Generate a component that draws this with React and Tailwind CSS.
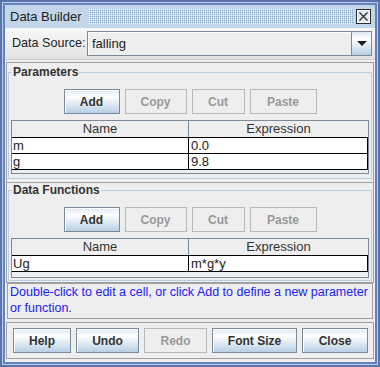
import React from 'react';

const font = "font-['Liberation_Sans',Arial,sans-serif]";

// Metal / Ocean styled push button
function Btn({ label, width, disabled }) {
  const base = 'h-[25px] flex items-center justify-center text-[12px] font-bold leading-none border';
  const look = disabled
    ? 'border-[#b8b8b8] bg-[#eeeeee] text-[#999999]'
    : 'border-[#7a8a99] bg-[linear-gradient(to_bottom,#dde8f3_0%,#ffffff_30%,#b8cfe5_100%)] text-[#333333] shadow-[inset_1px_1px_0_#ffffff]';
  return (
    <button type="button" className={`${base} ${look}`} style={{ width }}>
      {label}
    </button>
  );
}

function Table({ rows, empty }) {
  return (
    <div className="mx-[2px] mt-[6px] border border-[#7a8a99] bg-[#eeeeee] text-[13px] text-[#222222]">
      <div className="flex h-[17px] border-b border-black leading-[16px] text-[#333333]">
        <div className="w-[177px] border-r border-[#7a8a99] text-center">Name</div>
        <div className="flex-1 text-center">Expression</div>
      </div>
      {rows.map((r) => (
        <div key={r[0]} className="flex h-[16px] border-b border-r border-black bg-white leading-[15px]">
          <div className="w-[177px] border-r border-black pl-[1px]">{r[0]}</div>
          <div className="flex-1 pl-[2px]">{r[1]}</div>
        </div>
      ))}
      <div style={{ height: empty }} />
    </div>
  );
}

function Section({ title, rows, empty, outerClass, pb }) {
  return (
    <div className={`mx-[1px] border-x border-b border-[#a0a0a0] ${outerClass}`}>
      <fieldset className={`mx-[1px] border border-[#b8cfe5] ${pb}`}>
        <legend className="ml-[3px] px-[1px] text-[12px] font-bold leading-[14px] text-[#333333]">{title}</legend>
        <div className="flex justify-center gap-[5px] pt-[10px]">
          <Btn label="Add" width={56} />
          <Btn label="Copy" width={62} disabled />
          <Btn label="Cut" width={53} disabled />
          <Btn label="Paste" width={67} disabled />
        </div>
        <Table rows={rows} empty={empty} />
      </fieldset>
    </div>
  );
}

export default function App() {
  return (
    <div className={`${font} w-[380px] h-[367px] border-2 border-[#5a72ae] bg-[#6382bf]`}>
      <div className="h-full border border-[#b8cfe5]">
        <div className="h-full border-2 border-[#6382bf] bg-[#eeeeee] flex flex-col">
          {/* title bar */}
          <div className="h-[23px] flex items-center pl-[5px] pr-[4px] bg-[#c3d5e9]">
            <span className="text-[13px] text-[#222222] leading-none whitespace-nowrap">Data Builder</span>
            <svg className="ml-[7px] mr-[3px] flex-1 h-[15px]">
              <defs>
                <pattern id="bumps" width="2" height="2" patternUnits="userSpaceOnUse">
                  <rect x="0" y="0" width="1" height="1" fill="#f4f8fc" />
                  <rect x="1" y="1" width="1" height="1" fill="#8ea8c8" />
                </pattern>
              </defs>
              <rect width="100%" height="100%" fill="url(#bumps)" />
            </svg>
            <svg width="15" height="15" viewBox="0 0 15 15">
              <rect x="0.5" y="0.5" width="14" height="14" fill="#dfe9f4" stroke="#2a2a2a" />
              <rect x="1.5" y="1.5" width="12" height="12" fill="none" stroke="#ffffff" />
              <path d="M3.5 3.5 L11.5 11.5 M11.5 3.5 L3.5 11.5" stroke="#2a2a2a" strokeWidth="1.2" />
            </svg>
          </div>

          {/* data source toolbar */}
          <div className="h-[31px] flex items-center pl-[7px] pr-[3px] bg-[linear-gradient(to_bottom,#f8f8f8,#e3e3e3)]">
            <span className="text-[12.6px] text-[#222222] leading-none whitespace-nowrap">Data Source:</span>
            <div className="ml-auto w-[285px] h-[25px] flex border border-[#7a8a99] bg-[#eeeeee]">
              <div className="flex-1 flex items-center pl-[4px] text-[13px] text-[#222222] border-r border-[#7a8a99] shadow-[inset_1px_1px_0_#ffffff]">
                falling
              </div>
              <div className="w-[19px] flex items-center justify-center bg-[linear-gradient(to_bottom,#dde8f3_0%,#ffffff_30%,#b8cfe5_100%)]">
                <svg width="10" height="6" viewBox="0 0 10 6">
                  <path d="M0 0 H10 L5 5 Z" fill="#222222" />
                </svg>
              </div>
            </div>
          </div>

          <div className="h-[3px] border-t border-[#d0d0d0]" />

          <Section
            title="Parameters"
            rows={[['m', '0.0'], ['g', '9.8']]}
            empty={3}
            outerClass="border-t pt-[2px] pb-[3px]"
            pb="pb-[4px]"
          />
          <Section
            title="Data Functions"
            rows={[['Ug', 'm*g*y']]}
            empty={5}
            outerClass="pb-[1px]"
            pb="pb-[2px]"
          />

          {/* help message */}
          <div className="mx-[2px] h-[36px] border border-[#a0a0a0] pl-[2px] text-[12.5px] leading-[16px] text-[#2020ff]">
            Double-click to edit a cell, or click Add to define a new parameter or function.
          </div>

          {/* bottom buttons */}
          <div className="mx-[1px] mt-[3px] h-[37px] border border-[#a0a0a0] flex items-center gap-[5px] pl-[6px]">
            <Btn label="Help" width={58} />
            <Btn label="Undo" width={63} />
            <Btn label="Redo" width={63} disabled />
            <Btn label="Font Size" width={85} />
            <Btn label="Close" width={66} />
          </div>
        </div>
      </div>
    </div>
  );
}
